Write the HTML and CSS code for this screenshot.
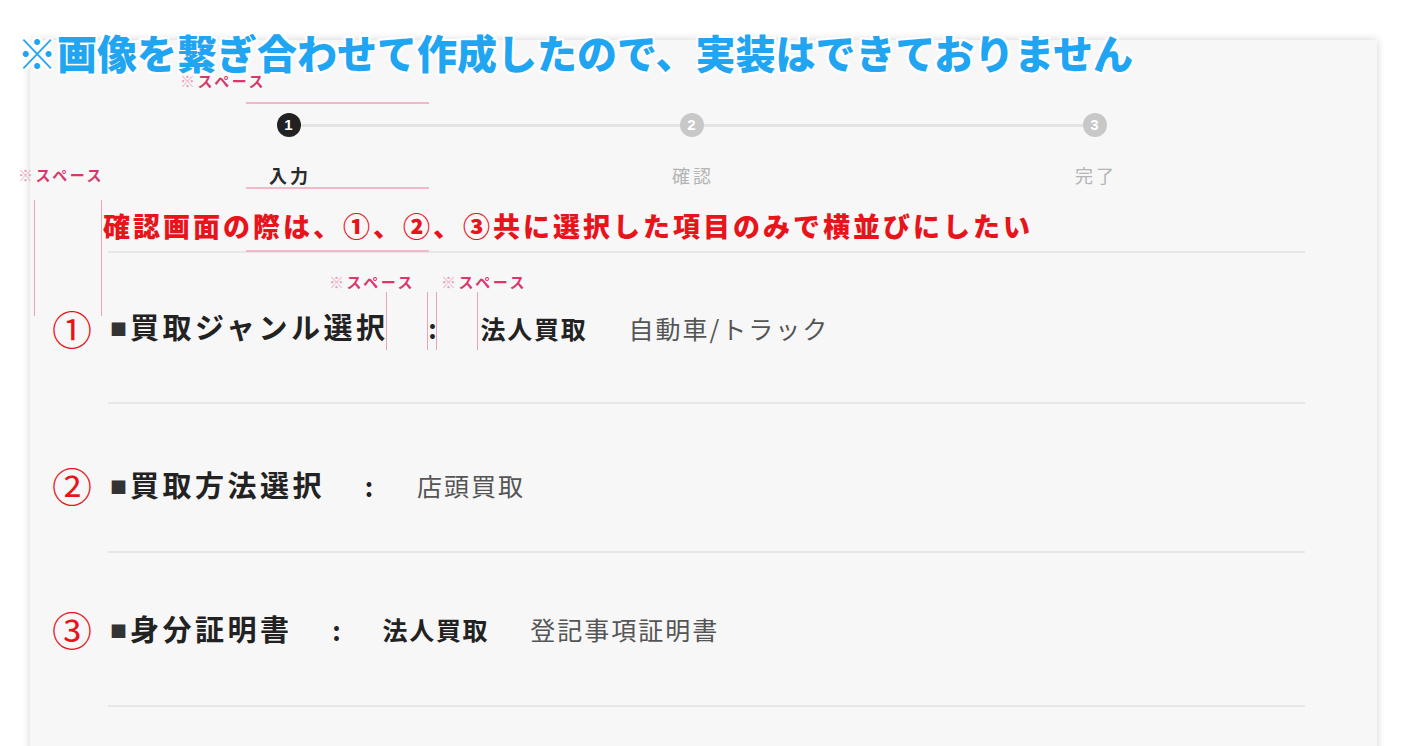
FILE: index.html
```html
<!DOCTYPE html>
<html lang="ja">
<head>
<meta charset="utf-8">
<title>確認画面</title>
<link rel="stylesheet" href="styles.css">
</head>
<body>
<div class="page">
  <div class="card">
    <div class="steps">
      <div class="step">
        <span class="dot dot-active">1</span>
        <span class="step-label step-label-active">入力</span>
      </div>
      <div class="step">
        <span class="dot">2</span>
        <span class="step-label">確認</span>
      </div>
      <div class="step">
        <span class="dot">3</span>
        <span class="step-label">完了</span>
      </div>
    </div>

    <p class="note">確認画面の際は、①、②、③共に選択した項目のみで横並びにしたい</p>

    <div class="sep"></div>
    <div class="row row-1">
      <span class="num">①</span>
      <span class="label"><span class="sq">■</span>買取ジャンル選択</span>
      <span class="colon">:</span>
      <span class="val-bold">法人買取</span>
      <span class="val">自動車/トラック</span>
    </div>
    <div class="sep"></div>
    <div class="row row-2">
      <span class="num">②</span>
      <span class="label"><span class="sq">■</span>買取方法選択</span>
      <span class="colon">:</span>
      <span class="val val-first">店頭買取</span>
    </div>
    <div class="sep"></div>
    <div class="row row-3">
      <span class="num">③</span>
      <span class="label"><span class="sq">■</span>身分証明書</span>
      <span class="colon colon-tight">:</span>
      <span class="val-bold">法人買取</span>
      <span class="val">登記事項証明書</span>
    </div>
    <div class="sep"></div>
  </div>

  <h1 class="notice">※画像を繋ぎ合わせて作成したので、実装はできておりません</h1>

  <span class="anno anno-top"><span class="anno-mark">※</span>スペース</span>
  <span class="anno anno-left"><span class="anno-mark">※</span>スペース</span>
  <span class="anno anno-r1"><span class="anno-mark">※</span>スペース</span>
  <span class="anno anno-r2"><span class="anno-mark">※</span>スペース</span>

  <span class="hline hline-1"></span>
  <span class="hline hline-2"></span>
  <span class="hline hline-3"></span>

  <span class="vline vline-l1"></span>
  <span class="vline vline-l2"></span>
  <span class="vline vline-s vline-s1"></span>
  <span class="vline vline-s vline-s2"></span>
  <span class="vline vline-s vline-s3"></span>
  <span class="vline vline-s vline-s4"></span>
</div>
</body>
</html>
```

FILE: styles.css
```css
html, body {
  margin: 0;
  padding: 0;
  background: #ffffff;
}

body {
  font-family: "Noto Sans CJK JP", "Noto Sans", sans-serif;
  color: #222;
}

.page {
  position: relative;
  height: 746px;
  overflow: hidden;
  padding-top: 40px;
  box-sizing: border-box;
}

.card {
  display: flow-root;
  margin-left: 30px;
  width: 1347px;
  height: 800px;
  background: #f7f7f7;
  box-shadow: 0 0 8px rgba(0, 0, 0, 0.18);
}

/* steps */
.steps {
  position: relative;
  display: grid;
  grid-template-columns: repeat(3, 403px);
  margin: 73px 0 0 57px;
  width: 1209px;
}

.steps::before {
  content: "";
  position: absolute;
  left: 201px;
  right: 201px;
  top: 11px;
  height: 3px;
  background: #e3e3e3;
}

.step {
  display: flex;
  flex-direction: column;
  align-items: center;
}

.dot {
  position: relative;
  z-index: 1;
  width: 24px;
  height: 24px;
  border-radius: 50%;
  background: #c8c8c8;
  color: #ffffff;
  font-family: "Liberation Sans", sans-serif;
  font-weight: 700;
  font-size: 15px;
  line-height: 24px;
  text-align: center;
}

.dot-active {
  background: #222222;
}

.step-label {
  margin-top: 27px;
  font-size: 18px;
  line-height: 22px;
  letter-spacing: 3px;
  padding-left: 3px;
  color: #b4b4b4;
}

.step-label-active {
  color: #2a2a2a;
  font-weight: 700;
}

/* red note */
.note {
  margin: 24px 0 0 73px;
  font-size: 27px;
  line-height: 32px;
  letter-spacing: 3px;
  font-weight: 900;
  color: #e8141c;
  white-space: nowrap;
}

/* rows */
.sep {
  margin-left: 78px;
  width: 1197px;
  height: 2px;
  background: #e7e7e7;
}

.note + .sep {
  margin-top: 9px;
}

.row {
  display: flex;
  align-items: center;
  box-sizing: border-box;
  white-space: nowrap;
}

.row-1 { height: 149px; }
.row-2 { height: 147px; padding-top: 15px; }
.row-3 { height: 152px; }

.num {
  width: 44px;
  margin-left: 20px;
  margin-right: 16px;
  text-align: center;
  font-size: 40px;
  line-height: 1;
  color: #e8141c;
}

.label {
  font-size: 29px;
  line-height: 36px;
  font-weight: 700;
  letter-spacing: 3.5px;
  color: #222;
}

.sq {
  font-size: 17px;
  letter-spacing: 0;
  margin-right: 3px;
  vertical-align: 3px;
  color: #333;
}

.colon {
  display: inline-block;
  width: 12px;
  margin-left: 38px;
  margin-right: 42px;
  text-align: center;
  font-size: 26px;
  font-weight: 700;
  color: #222;
}

.colon-tight {
  margin-right: 40px;
}

.val-bold {
  font-size: 25px;
  line-height: 30px;
  font-weight: 700;
  letter-spacing: 1.7px;
  color: #222;
  margin-right: 41px;
}

.val {
  font-size: 25px;
  line-height: 30px;
  letter-spacing: 2px;
  color: #555;
}

/* overlays: title and annotation marks */
.notice {
  position: absolute;
  left: 17px;
  top: 32px;
  margin: 0;
  font-size: 40px;
  line-height: 40px;
  font-weight: 900;
  color: #1fa5f2;
  white-space: nowrap;
  text-shadow:
    2px 0 0 #fff, -2px 0 0 #fff, 0 2px 0 #fff, 0 -2px 0 #fff,
    2px 2px 0 #fff, -2px -2px 0 #fff, 2px -2px 0 #fff, -2px 2px 0 #fff;
}

.anno {
  position: absolute;
  font-size: 15px;
  line-height: 12px;
  font-weight: 700;
  letter-spacing: 2.6px;
  color: #d8386b;
  white-space: nowrap;
}

.anno-mark {
  color: #eaa2b8;
}

.anno-top { left: 180px; top: 75px; }
.anno-left { left: 18px; top: 169px; }
.anno-r1 { left: 329px; top: 276px; }
.anno-r2 { left: 441px; top: 276px; }

.hline {
  position: absolute;
  left: 246px;
  width: 183px;
  height: 2px;
  background: #f3b7c8;
}

.hline-1 { top: 102px; }
.hline-2 { top: 187px; }
.hline-3 { top: 250px; }

.vline {
  position: absolute;
  width: 1px;
  background: #eba3b9;
  top: 200px;
  height: 116px;
}

.vline-l1 { left: 34px; }
.vline-l2 { left: 101px; }

.vline-s {
  top: 292px;
  height: 58px;
}

.vline-s1 { left: 386px; }
.vline-s2 { left: 427px; }
.vline-s3 { left: 436px; }
.vline-s4 { left: 477px; }
```
